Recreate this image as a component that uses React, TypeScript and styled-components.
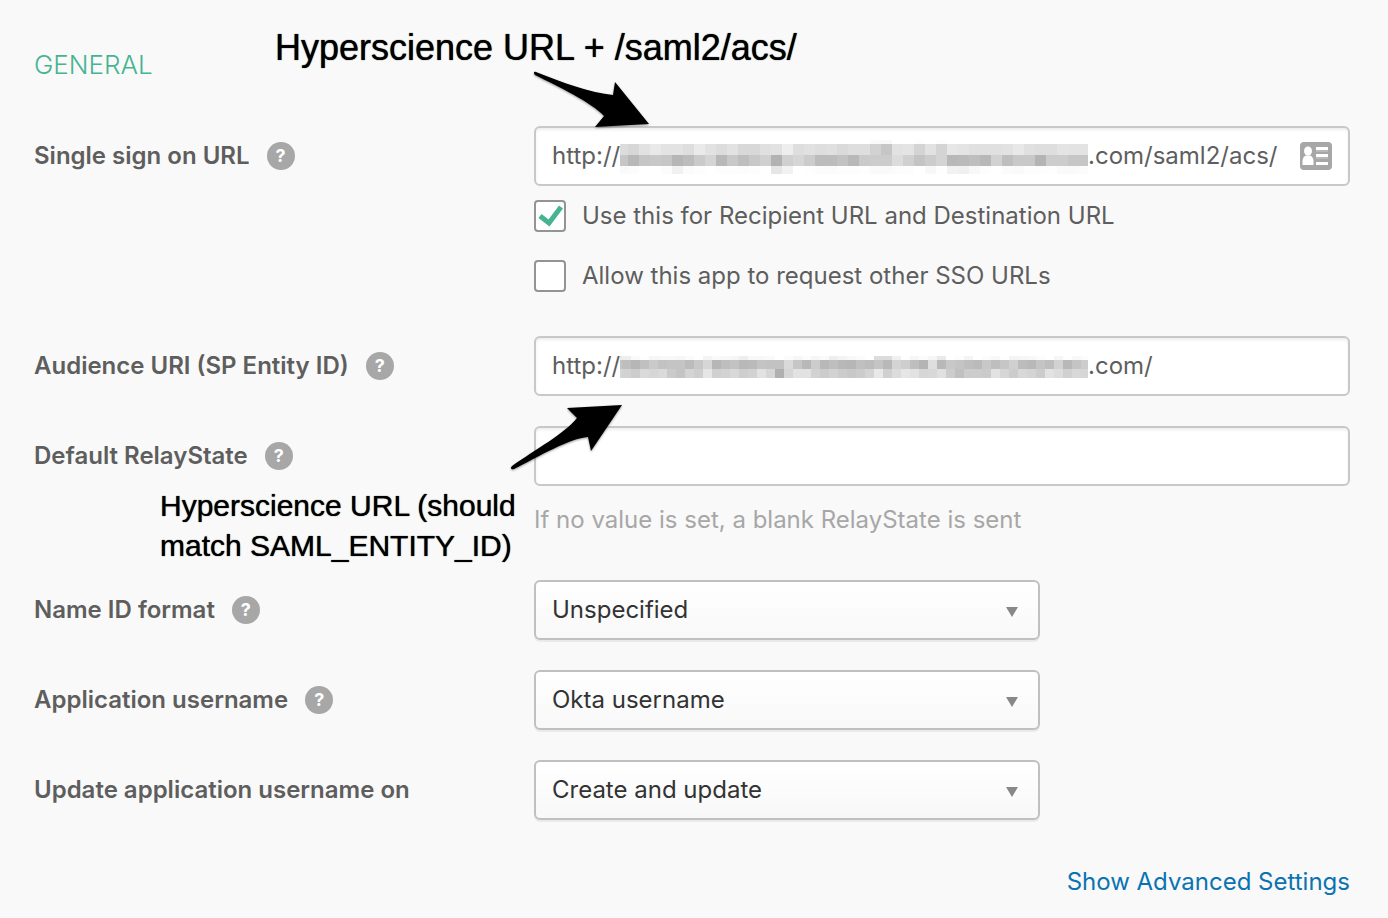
import React from "react";
import styled, { createGlobalStyle } from "styled-components";

const GlobalStyle = createGlobalStyle`
  *, *::before, *::after { box-sizing: border-box; }
  body {
    margin: 0;
    background: #f9f9f9;
    color: #5e5e5e;
    font-family: Inter, "Open Sans", sans-serif;
    font-size: 24px;
    line-height: 32px;
  }
  input, select, button { font: inherit; color: inherit; }
`;

const Page = styled.main`
  position: relative;
  padding: 49px 38px 20px 34px;
`;

const SectionTitle = styled.h2`
  margin: 0 0 45px;
  color: #46b491;
  font-size: 26px;
  font-weight: 300;
  line-height: 32px;
`;

const Form = styled.form`
  display: flex;
  flex-direction: column;
  gap: 30px;
`;

const Row = styled.div`
  display: grid;
  grid-template-columns: 500px minmax(0, 1fr);
  align-items: start;
`;

const LabelCell = styled.div`
  display: flex;
  align-items: center;
  gap: 17px;
  height: 60px;
`;

const Label = styled.label`
  font-weight: 600;
`;

const HelpButton = styled.button`
  display: grid;
  place-items: center;
  width: 28px;
  height: 28px;
  padding: 0;
  border: 0;
  border-radius: 50%;
  background: #a7a7a7;
  color: #fff;
  font-size: 18px;
  font-weight: 700;
  line-height: 28px;
`;

const Control = styled.div`
  display: flex;
  flex-direction: column;
`;

const TextField = styled.div`
  display: flex;
  align-items: center;
  height: 60px;
  padding: 0 16px;
  border: 2px solid #c8c8c8;
  border-radius: 6px;
  background: #fff;
  box-shadow: inset 0 2px 3px rgba(0, 0, 0, 0.07);
`;

const Scheme = styled.span`
  flex: none;
  width: 68px;
`;

const FieldInput = styled.input`
  flex: 1;
  min-width: 0;
  padding: 0;
  border: 0;
  outline: 0;
  background: transparent;
`;

const Redaction = styled.svg`
  flex: none;
  display: block;
`;

const CardIcon = styled.svg`
  flex: none;
  display: block;
`;

const CheckList = styled.div`
  display: flex;
  flex-direction: column;
  gap: 28px;
  padding: 14px 0;
`;

const CheckLabel = styled.label`
  display: flex;
  align-items: center;
  gap: 16px;
`;

const Checkbox = styled.input`
  flex: none;
  appearance: none;
  width: 32px;
  height: 32px;
  margin: 0;
  border: 2px solid #949494;
  border-radius: 4px;
  background: #fff;

  &:checked {
    background: #fff
      url("data:image/svg+xml,%3Csvg xmlns='http://www.w3.org/2000/svg' width='28' height='28'%3E%3Cpath d='M4 14L13 21L25 5' fill='none' stroke='%2346b491' stroke-width='5'/%3E%3C/svg%3E")
      center no-repeat;
  }
`;

const Hint = styled.p`
  margin: 18px 0 14px;
  color: #a7a7a7;
`;

const SelectBox = styled.div`
  display: grid;
  align-items: center;
  width: 506px;
  max-width: 100%;

  > * { grid-area: 1 / 1; }
`;

const Select = styled.select`
  appearance: none;
  width: 100%;
  height: 60px;
  padding: 0 48px 0 16px;
  border: 2px solid #c0c0c0;
  border-radius: 6px;
  background: linear-gradient(#fff, #f8f8f8);
  box-shadow: 0 2px 0 rgba(0, 0, 0, 0.06);
  color: #333;
`;

const Caret = styled.svg`
  justify-self: end;
  margin: 4px 22px 0 0;
  pointer-events: none;
`;

const Footer = styled.footer`
  display: flex;
  justify-content: flex-end;
  margin-top: 46px;
`;

const AdvancedLink = styled.a`
  color: #0a73b1;
  text-decoration: none;
`;

const Note = styled.p<{ $left: number; $top: number; $size: number }>`
  position: absolute;
  left: ${(p) => p.$left}px;
  top: ${(p) => p.$top}px;
  margin: 0;
  color: #000;
  font-family: "Liberation Sans", Arial, sans-serif;
  font-size: ${(p) => p.$size}px;
  line-height: 40px;
  white-space: nowrap;
  text-shadow: 0 0 1px #000;
`;

const Arrow = styled.svg<{ $left: number; $top: number }>`
  position: absolute;
  left: ${(p) => p.$left}px;
  top: ${(p) => p.$top}px;
  overflow: visible;
  pointer-events: none;
  filter: drop-shadow(0 1px 1px rgba(0, 0, 0, 0.4));
`;

type Band = { y: number; height: number; greys: string };

type MosaicProps = { first: number; cell: number; bands: Band[] };

/* Each band is a run of two-digit grey levels, one per cell. */
function Mosaic({ first, cell, bands }: MosaicProps) {
  return (
    <Redaction width="468" height="36" shapeRendering="crispEdges" aria-hidden="true">
      {bands.map((band) =>
        band.greys.split(" ").map((g, i) => {
          const x = i === 0 ? 0 : first + (i - 1) * cell;
          const w = i === 0 ? first : cell;
          return <rect key={`${band.y}-${i}`} x={x} y={band.y} width={w} height={band.height} fill={`#${g}${g}${g}`} />;
        })
      )}
    </Redaction>
  );
}

const SSO_BANDS: Band[] = [
  { y: 2, height: 4, greys: "ff ff ff ff ff ff ff ff ff ff ff ff ff ff ff ff ff ff ff ff ff ff ff fa f8 ff ff fd ff fd" },
  { y: 6, height: 11, greys: "dc d7 e2 e9 e3 e3 de ea e2 dc e2 d8 d8 e0 e2 ee de e1 de e0 da de de d2 c6 e2 e4 d4 e2 d4 e7 e4 e0 e0 e0 e2 e8 e0 de de e4 e3 e3" },
  { y: 17, height: 11, greys: "c6 b8 c6 c8 c6 b6 bc ca d4 b8 c8 be c8 d0 b2 d0 d6 cc bc bc c2 b8 ca cc cc dc d0 c4 cc d4 b8 ba be b8 d2 be c8 c8 b4 cc cc c6 c6" },
  { y: 28, height: 9, greys: "fa fc ff ff fc f1 fb fd ff fd fd fc fd ff e6 f2 ff fe fc fb fd fd fe fa fa fc fd ff f8 fe f2 f0 f8 fd ff fb fa fd fd fe fa fa fc" },
];

const AUDIENCE_BANDS: Band[] = [
  { y: 8, height: 4, greys: "ea ee fa fe f6 f8 f8 f6 fb ff f4 fa f8 f6 ee f8 f8 fa ff fc f6 fc f6 fa ee f4 f8 fb ff dc dc f0 fe f6 fc f6 ea ff fc f4 ff fc f8 fe f4 f6 f8 fc ff f6 fe f8 fc" },
  { y: 12, height: 9, greys: "c4 be b6 c0 ca c2 c4 c4 bc c8 d6 b6 be c2 b8 ba c4 c2 c2 da c6 b8 cc b8 be b8 b6 c0 bc c4 b8 d4 ce be b4 de b8 c8 c4 be ba c8 be c6 d0 bc b8 c4 be d2 b8 c4 cc" },
  { y: 21, height: 9, greys: "d6 d2 cc da d6 da ca c4 d4 ce e6 d0 d2 d8 ce d2 e2 d6 b0 d6 e2 e2 d2 cc d2 cc c8 cc d4 e8 d0 dc e6 e2 d6 d8 e0 cc c0 cc cc ca e2 d6 cc d8 d4 cc e2 dc d0 d8 d6" },
];

function Help({ topic }: { topic: string }) {
  return (
    <HelpButton type="button" aria-label={`Help: ${topic}`}>
      ?
    </HelpButton>
  );
}

type FieldProps = { id: string; label: string; help?: boolean; children: React.ReactNode };

function FieldRow({ id, label, help = true, children }: FieldProps) {
  return (
    <Row>
      <LabelCell>
        <Label htmlFor={id}>{label}</Label>
        {help && <Help topic={label} />}
      </LabelCell>
      <Control>{children}</Control>
    </Row>
  );
}

function Dropdown({ id, options }: { id: string; options: string[] }) {
  return (
    <SelectBox>
      <Select id={id} defaultValue={options[0]}>
        {options.map((o) => (
          <option key={o}>{o}</option>
        ))}
      </Select>
      <Caret width="12" height="10" aria-hidden="true">
        <path d="M0 0H12L6 10Z" fill="#888" />
      </Caret>
    </SelectBox>
  );
}

export default function App() {
  return (
    <>
      <GlobalStyle />
      <Page>
        <SectionTitle>GENERAL</SectionTitle>
        <Form>
          <FieldRow id="sso-url" label="Single sign on URL">
            <TextField>
              <Scheme>http://</Scheme>
              <Mosaic first={8} cell={11} bands={SSO_BANDS} />
              <FieldInput id="sso-url" type="text" defaultValue=".com/saml2/acs/" />
              <CardIcon width="32" height="28" aria-hidden="true">
                <rect width="32" height="28" rx="4" fill="#a7a7a7" />
                <path d="M16 8H28V10H16ZM16 15H28V17H16Z" fill="#b8b8b8" />
                <g fill="#fff">
                  <ellipse cx="8" cy="9" rx="4" ry="4.5" />
                  <path d="M2.500 23V19C2.500 15.500 4.500 14 6 13.500H10C11.500 14 13.500 15.500 13.500 19V23Z" />
                  <path d="M16 5H28V8H16ZM16 12H28V15H16ZM16 20H28V23H16Z" />
                </g>
              </CardIcon>
            </TextField>
            <CheckList>
              <CheckLabel>
                <Checkbox type="checkbox" defaultChecked />
                Use this for Recipient URL and Destination URL
              </CheckLabel>
              <CheckLabel>
                <Checkbox type="checkbox" />
                Allow this app to request other SSO URLs
              </CheckLabel>
            </CheckList>
          </FieldRow>

          <FieldRow id="audience-uri" label="Audience URI (SP Entity ID)">
            <TextField>
              <Scheme>http://</Scheme>
              <Mosaic first={2} cell={9} bands={AUDIENCE_BANDS} />
              <FieldInput id="audience-uri" type="text" defaultValue=".com/" />
            </TextField>
          </FieldRow>

          <FieldRow id="relay-state" label="Default RelayState">
            <TextField>
              <FieldInput id="relay-state" type="text" />
            </TextField>
            <Hint>If no value is set, a blank RelayState is sent</Hint>
          </FieldRow>

          <FieldRow id="name-id-format" label="Name ID format">
            <Dropdown id="name-id-format" options={["Unspecified"]} />
          </FieldRow>

          <FieldRow id="app-username" label="Application username">
            <Dropdown id="app-username" options={["Okta username"]} />
          </FieldRow>

          <FieldRow id="update-on" label="Update application username on" help={false}>
            <Dropdown id="update-on" options={["Create and update"]} />
          </FieldRow>
        </Form>
        <Footer>
          <AdvancedLink href="#advanced">Show Advanced Settings</AdvancedLink>
        </Footer>

        <Note $left={275} $top={28} $size={36}>
          Hyperscience URL + /saml2/acs/
        </Note>
        <Arrow $left={533} $top={71} width="118" height="58" aria-hidden="true">
          <path d="M3 1C28 11 58 22 80 24L82 11L116 53L62 56L71 45C58 31 26 16 2 4C0 2 1 0 3 1Z" />
        </Arrow>
        <Note $left={160} $top={486} $size={30}>
          Hyperscience URL (should
          <br />
          match SAML_ENTITY_ID)
        </Note>
        <Arrow $left={510} $top={404} width="114" height="68" aria-hidden="true">
          <path d="M2 62C26 45 54 30 67 14L57 4L112 1L81 47L78 33C60 34 28 53 4 65C1 66 0 64 2 62Z" />
        </Arrow>
      </Page>
    </>
  );
}
